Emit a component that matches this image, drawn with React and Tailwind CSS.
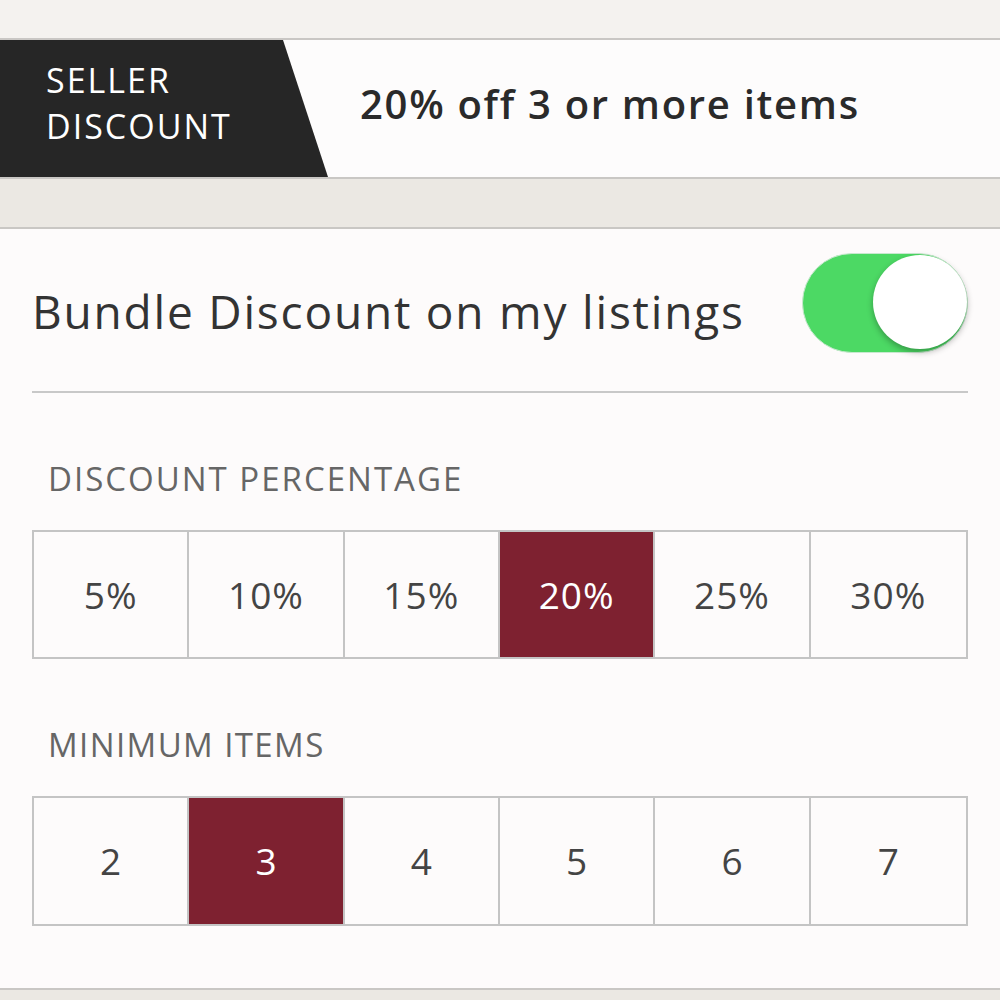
export default function App() {
  const percents = ["5%", "10%", "15%", "20%", "25%", "30%"];
  const items = ["2", "3", "4", "5", "6", "7"];
  const font = { fontFamily: "'Open Sans', Lato, sans-serif" };

  return (
    <div className="w-[1000px] h-[1000px] overflow-hidden bg-[#ebe8e3]" style={font}>
      {/* top strip */}
      <div className="h-[40px] bg-[#f4f2ef] border-b-2 border-[#c9c7c4]" />

      {/* seller discount banner */}
      <div className="h-[139px] flex bg-[#fdfcfc] border-b-2 border-[#c9c7c4]">
        <div className="w-[328px] h-full bg-[#262626] [clip-path:polygon(0_0,283px_0,100%_100%,0_100%)] flex flex-col justify-center pl-[46px] pb-[12px] text-white text-[34px] leading-[46px] tracking-[2px]">
          <span>SELLER</span>
          <span>DISCOUNT</span>
        </div>
        <div className="flex items-center pl-[32px] pb-[10px] text-[40px] font-semibold tracking-[1.7px] text-[#2a2a2a]">
          20% off 3 or more items
        </div>
      </div>

      {/* gap */}
      <div className="h-[48px]" />

      {/* settings card */}
      <div className="h-[763px] bg-[#fdfbfb] border-y-2 border-[#c9c7c4] px-[32px]">
        <div className="h-[162px] flex items-center justify-between">
          <span className="text-[46px] tracking-[1.8px] text-[#333] pt-[2px]">Bundle Discount on my listings</span>
          <div className="relative w-[166px] h-[100px] -mt-[14px] rounded-full bg-[#4cd964] border border-[#c8e8cf]">
            <div className="absolute right-0 top-[1px] w-[94px] h-[94px] rounded-full bg-white shadow-[0_3px_6px_rgba(0,0,0,0.3)]" />
          </div>
        </div>
        <div className="h-[2px] bg-[#c8c8c8]" />

        <div className="pt-[68px] pl-[16px] text-[33px] leading-[36px] tracking-[2px] text-[#666]">DISCOUNT PERCENTAGE</div>
        <div className="mt-[33px] grid grid-cols-6 h-[129px] border-2 border-[#c4c4c4] divide-x-2 divide-[#c4c4c4]">
          {percents.map((p) => (
            <div
              key={p}
              className={`flex items-center justify-center text-[37px] tracking-[1px] ${p === "20%" ? "bg-[#7e2130] text-white" : "text-[#444]"}`}
            >
              {p}
            </div>
          ))}
        </div>

        <div className="pt-[68px] pl-[16px] text-[33px] leading-[36px] tracking-[1.4px] text-[#666]">MINIMUM ITEMS</div>
        <div className="mt-[33px] grid grid-cols-6 h-[130px] border-2 border-[#c4c4c4] divide-x-2 divide-[#c4c4c4]">
          {items.map((n) => (
            <div
              key={n}
              className={`flex items-center justify-center text-[37px] ${n === "3" ? "bg-[#7e2130] text-white" : "text-[#444]"}`}
            >
              {n}
            </div>
          ))}
        </div>
      </div>
    </div>
  );
}
